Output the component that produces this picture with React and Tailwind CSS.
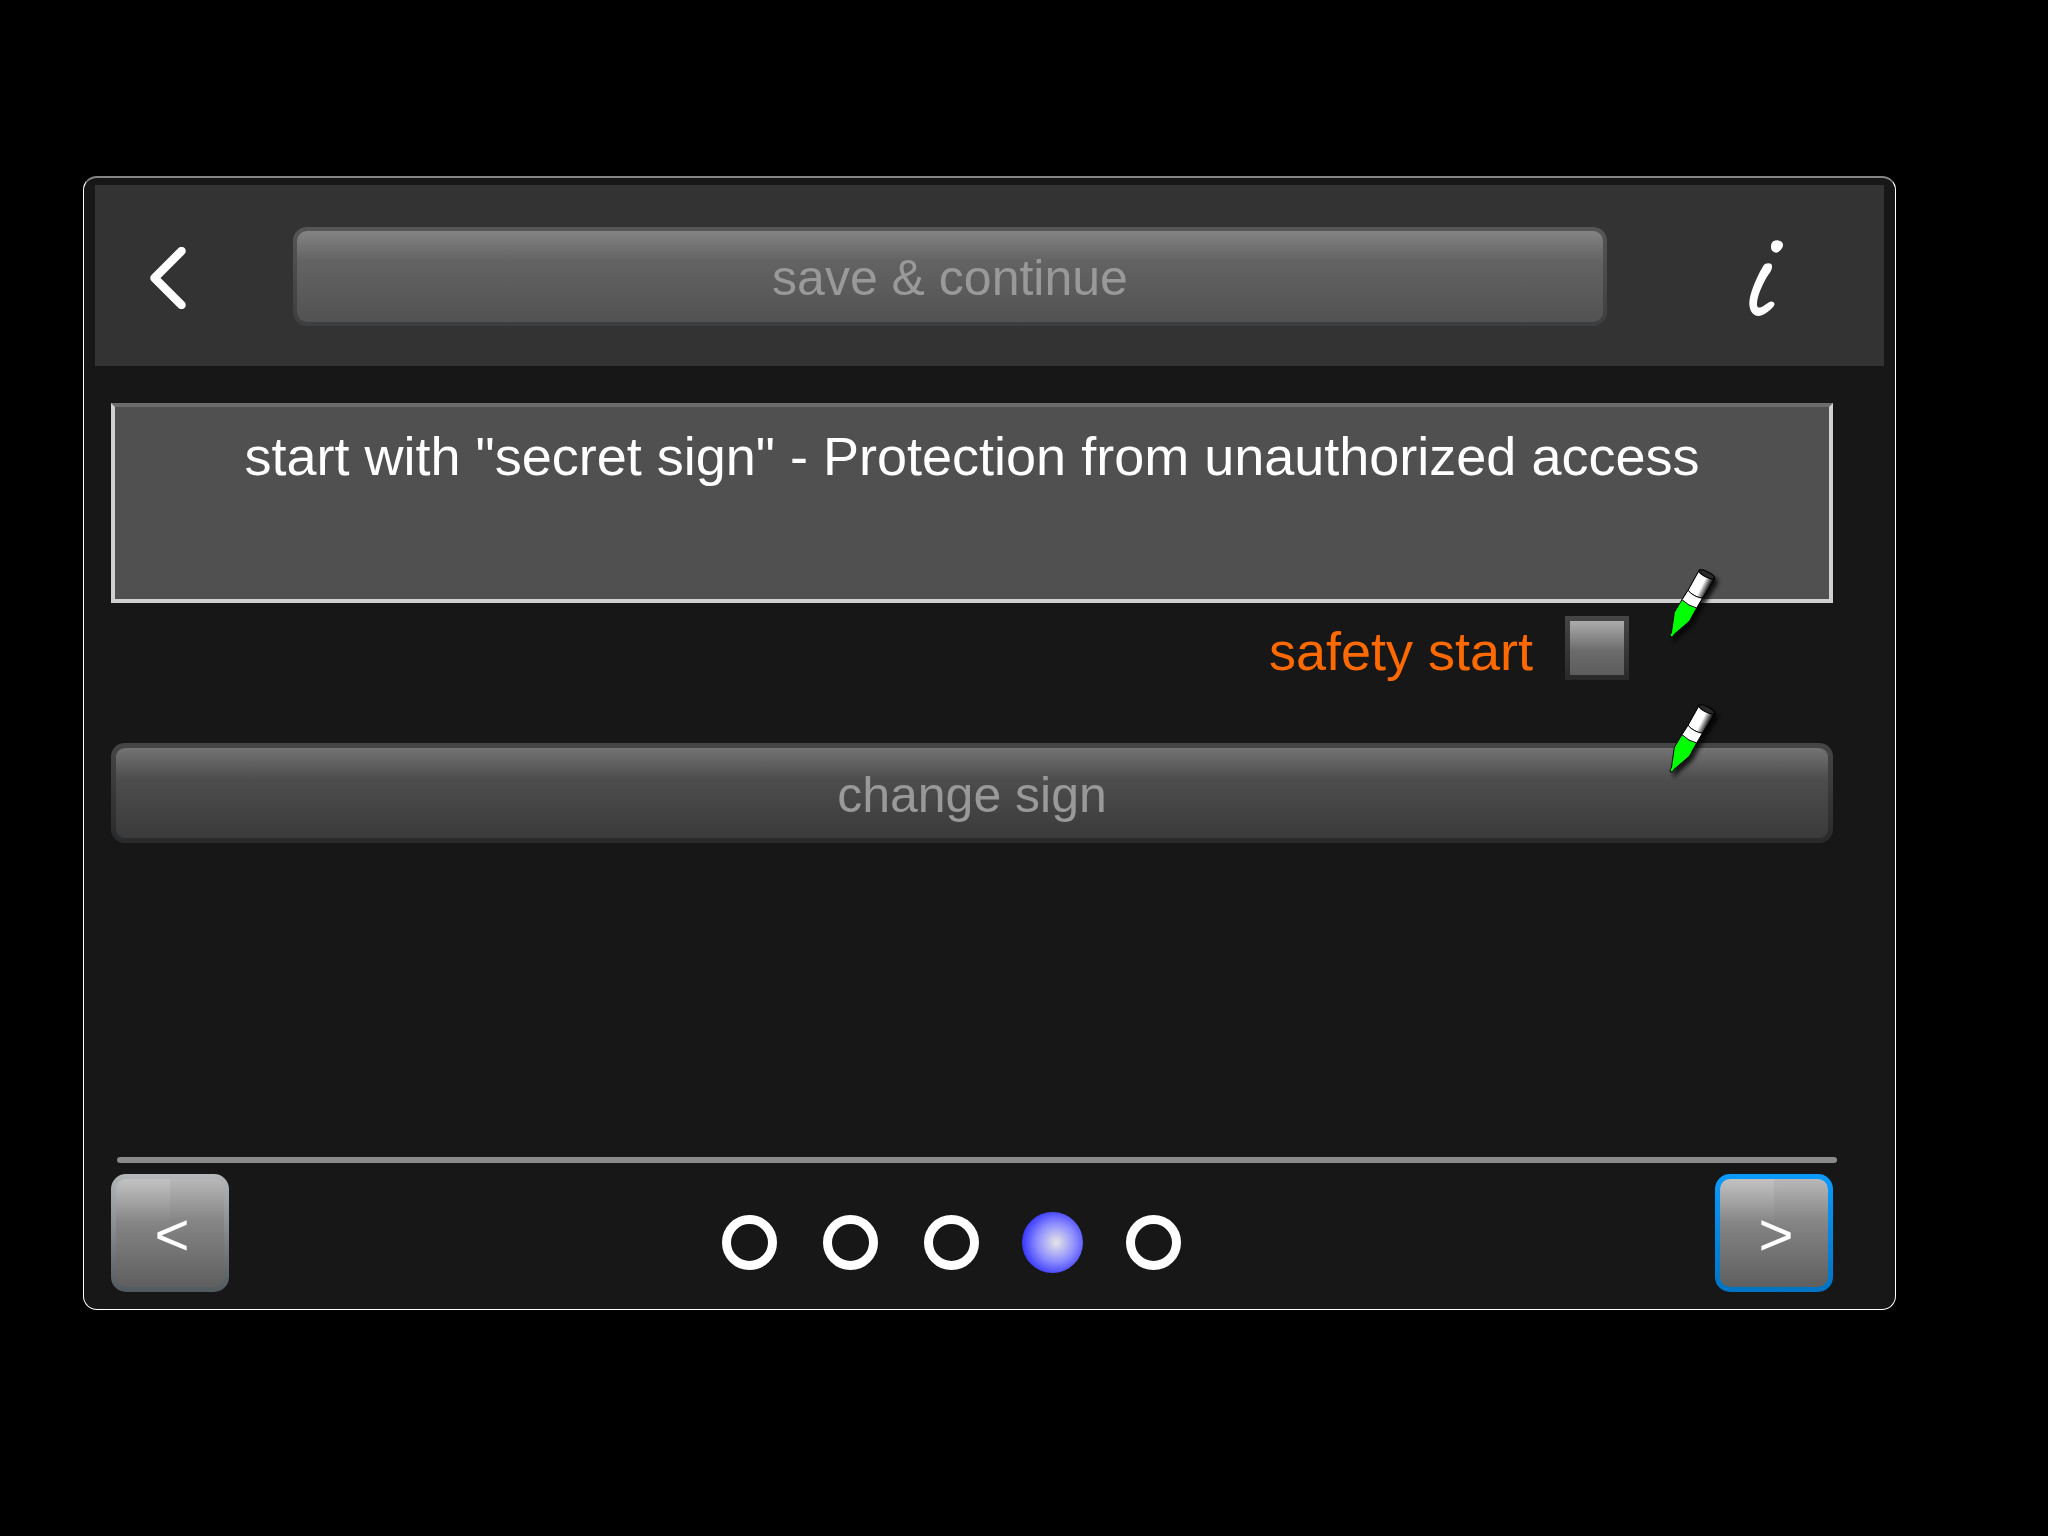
import React, { useState } from 'react';
import clsx from 'clsx';

const STEPS = [1, 2, 3, 4, 5];
const INFO_TEXT = 'start with "secret sign" - Protection from unauthorized access';

const MarkerPen = ({ className }) => (
  <svg
    className={clsx(
      'pointer-events-none absolute h-[74px] w-[52px] drop-shadow-[3px_4px_2px_rgba(0,0,0,0.8)]',
      className
    )}
    viewBox="384 80 156 222"
    aria-hidden="true"
  >
    <defs>
      <linearGradient id="barrel" gradientUnits="userSpaceOnUse" x1="458" y1="118" x2="504" y2="141">
        <stop offset="0.55" stopColor="#fff" />
        <stop offset="0.85" stopColor="#555" />
        <stop offset="1" stopColor="#111" />
      </linearGradient>
    </defs>
    <path
      d="M474 88 L441 147 L423 175 L400 213 L391 276 L387 279 L389 287 L396 286 L398 280 L445 240 L467 200 L484 171 L521 112 Z"
      fill="#0f0"
      stroke="#000"
      strokeWidth="3"
      strokeLinejoin="round"
    />
    <path d="M474 88 L441 147 Q457 166 484 171 L521 112 Z" fill="url(#barrel)" stroke="#000" strokeWidth="3" />
    <path d="M441 147 Q457 166 484 171 L467 200 Q443 195 423 175 Z" fill="#fff" stroke="#000" strokeWidth="3" />
    <ellipse cx="497" cy="99" rx="26" ry="8" transform="rotate(27 497 99)" fill="#2a2a2a" stroke="#000" strokeWidth="3" />
  </svg>
);

const App = () => {
  const [step, setStep] = useState(4);
  const [safetyStart, setSafetyStart] = useState(false);

  return (
    <div className="flex min-h-screen flex-col bg-black pt-44 pr-[152px] pb-[226px] pl-[83px] font-['Liberation_Sans',Arial,sans-serif] text-white">
      <main className="flex flex-1 flex-col rounded-[14px] border border-t-2 border-white border-t-[#858585] bg-[#171717] pt-[7px]">
        <header className="mx-[11px] flex items-center bg-[#333] pt-[42px] pr-[101px] pb-10 pl-[55px]">
          <button type="button" aria-label="Back" className="shrink-0 pt-[3px]">
            <svg className="h-[62px] w-9" viewBox="0 0 36 62" fill="none" aria-hidden="true">
              <path d="M31.5 4 L4.5 31 L31.5 58" stroke="#fff" strokeWidth="8.5" strokeLinecap="round" strokeLinejoin="round" />
            </svg>
          </button>
          <button
            type="button"
            disabled
            className="mr-[142px] ml-[107px] h-[99px] flex-1 rounded-[14px] border-4 border-transparent pt-[3px] text-[50px] leading-none text-[#999] [background:linear-gradient(#848484,#636363_33%,#525252)_padding-box,linear-gradient(#565656,#3d3e40)_border-box]"
          >
            save &amp; continue
          </button>
          <button type="button" aria-label="Info" className="shrink-0 pt-[3px]">
            <svg className="h-[76px] w-[34px]" viewBox="567 242 102 228" fill="#fff" aria-hidden="true">
              <path d="M640 246 C650 240 669 243 669 257 C669 266 658 279 649 280 C637 280 632 270 633 260 C634 253 636 249 640 246 Z" />
              <path d="M611 318 C615 311 635 309 636 319 C637 337 625 343 614 365 C602 389 591 414 591 436 C591 446 600 447 609 441 L627 429 C635 424 646 428 643 437 C640 445 615 469 596 470 C578 470 568 452 568 433 C568 406 584 370 599 339 Z" />
            </svg>
          </button>
        </header>

        <section className="mt-[37px] mr-[62px] ml-[27px]">
          <textarea
            readOnly
            aria-label="Description"
            value={INFO_TEXT}
            className="block h-[200px] w-full resize-none border-4 border-[#d0d0d0] border-t-[#6c6c6c] bg-[#505050] pt-5 text-center text-[54px] leading-[58px] outline-none"
          />
          <div className="relative mt-[13px] flex items-start justify-end gap-8 pr-[204px]">
            <label htmlFor="safety-start" className="text-[54px] leading-[70px] text-[#ff6a00]">
              safety start
            </label>
            <input
              id="safety-start"
              type="checkbox"
              checked={safetyStart}
              onChange={(e) => setSafetyStart(e.target.checked)}
              className="size-16 appearance-none border-5 border-transparent [background:linear-gradient(#acacac,#6c6c6c_55%,#5c5c5c)_padding-box,linear-gradient(#464646,#292929)_border-box]"
            />
            <MarkerPen className="-top-12 right-28" />
          </div>
          <div className="relative mt-[57px]">
            <button
              type="button"
              disabled
              className="h-[100px] w-full rounded-[14px] border-5 border-transparent pt-[3px] text-[50px] leading-none text-[#999] [background:linear-gradient(#737373,#4d4d4d_35%,#3a3a3a)_padding-box,linear-gradient(#464646,#292a2c)_border-box]"
            >
              change sign
            </button>
            <MarkerPen className="-top-10 right-28" />
          </div>
        </section>

        <footer className="mt-auto mr-[62px] mb-[17px] ml-[27px]">
          <hr className="-mr-1 ml-1.5 h-1.5 rounded-full border-0 bg-[#8a8a8a]" />
          <nav className="mt-[11px] flex items-center justify-between">
            <button
              type="button"
              aria-label="Previous"
              onClick={() => setStep(Math.max(1, step - 1))}
              className="size-[118px] rounded-[15px] border-5 border-transparent pt-1 pl-1 text-[60px] leading-none [background:linear-gradient(#fff2,#fff0_45%)_left/50%_100%_no-repeat_padding-box,linear-gradient(#b8b8b8,#868686_38%,#5f5f5f)_padding-box,linear-gradient(#b4b8ba,#50595d)_border-box]"
            >
              &lt;
            </button>
            <div className="flex items-center gap-[46px] pt-[18px] pr-[41px]">
              {STEPS.map((s) => (
                <span
                  key={s}
                  className={
                    s === step
                      ? '-mx-[3px] size-[61px] rounded-full bg-[radial-gradient(circle_35px_at_56%_50%,#dedee8_5%,#8c8cff_55%,#3c3cff_95%)]'
                      : 'size-[55px] rounded-full border-9 border-white'
                  }
                />
              ))}
            </div>
            <button
              type="button"
              aria-label="Next"
              onClick={() => setStep(Math.min(STEPS.length, step + 1))}
              className="size-[118px] rounded-[15px] border-5 border-transparent pt-1 pl-1 text-[60px] leading-none [background:linear-gradient(#fff2,#fff0_45%)_left/50%_100%_no-repeat_padding-box,linear-gradient(#b8b8b8,#868686_38%,#5f5f5f)_padding-box,linear-gradient(#0a9bff,#0073c4)_border-box]"
            >
              &gt;
            </button>
          </nav>
        </footer>
      </main>
    </div>
  );
};

export default App;
